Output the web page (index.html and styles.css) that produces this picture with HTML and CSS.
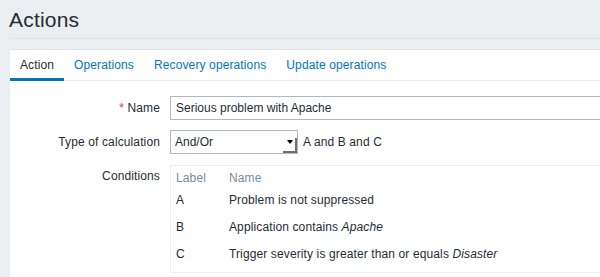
FILE: index.html
```html
<!DOCTYPE html>
<html lang="en">

<head>
    <meta charset="UTF-8">
    <meta name="viewport" content="width=device-width, initial-scale=1.0">
    <title>Actions</title>
    <link rel="stylesheet" href="styles.css">
</head>

<body>
    <header class="page-header">
        <h1>Actions</h1>
    </header>

    <main class="page-body">
        <div class="tab-panel">
            <ul class="tabs">
                <li class="tab active"><a href="#">Action</a></li>
                <li class="tab"><a href="#">Operations</a></li>
                <li class="tab"><a href="#">Recovery operations</a></li>
                <li class="tab"><a href="#">Update operations</a></li>
            </ul>

            <form class="form-list">
                <label class="form-label" for="name"><span class="required">*</span> Name</label>
                <div class="form-field">
                    <input type="text" id="name" class="textbox" value="Serious problem with Apache">
                </div>

                <label class="form-label" for="evaltype">Type of calculation</label>
                <div class="form-field">
                    <div class="select-wrap">
                        <select id="evaltype" class="select">
                            <option selected>And/Or</option>
                            <option>And</option>
                            <option>Or</option>
                            <option>Custom expression</option>
                        </select>
                        <span class="select-arrow"></span>
                    </div>
                    <span class="expression">A and B and C</span>
                </div>

                <div class="form-label form-label-top">Conditions</div>
                <div class="form-field">
                    <div class="conditions">
                        <table class="conditions-table">
                            <thead>
                                <tr>
                                    <th class="col-label">Label</th>
                                    <th>Name</th>
                                </tr>
                            </thead>
                            <tbody>
                                <tr>
                                    <td>A</td>
                                    <td>Problem is not suppressed</td>
                                </tr>
                                <tr>
                                    <td>B</td>
                                    <td>Application contains <em>Apache</em></td>
                                </tr>
                                <tr>
                                    <td>C</td>
                                    <td>Trigger severity is greater than or equals <em>Disaster</em></td>
                                </tr>
                            </tbody>
                        </table>
                    </div>
                </div>
            </form>
        </div>
    </main>
</body>

</html>
```

FILE: styles.css
```css
html,
body {
    overflow: hidden;
}

body {
    font-family: "Liberation Sans", Arial, sans-serif;
    font-size: 12px;
    line-height: 14px;
    letter-spacing: 0.12px;
    color: #1f2c33;
    margin: 0;
    padding: 0 0 0 10px;
    background-color: #ebeef0;
}

.page-header {
    padding: 8px 0 6px;
    border-bottom: 1px solid #dfe4e7;
    margin-bottom: 10px;
}

h1 {
    margin: 0 0 0 -1px;
    font-size: 21px;
    line-height: 24px;
    font-weight: normal;
    letter-spacing: 0.2px;
    color: #1f2c33;
}

.tab-panel {
    background: white;
    border-top: 1px solid #dfe4e7;
    min-height: 240px;
}

.tabs {
    display: flex;
    list-style: none;
    margin: 0;
    padding: 0;
    border-bottom: 1px solid #ebeef0;
}

.tab {
    margin-bottom: -1px;
}

.tab a {
    display: block;
    padding: 8px 10px 6px;
    border-bottom: 3px solid transparent;
    color: #0275b8;
    text-decoration: none;
}

.tab.active a {
    color: #1f2c33;
    border-bottom-color: #0275b8;
}

.form-list {
    display: grid;
    grid-template-columns: 150px auto;
    column-gap: 10px;
    row-gap: 10px;
    padding-top: 15px;
}

.form-label {
    text-align: right;
    padding-top: 5px;
}

.form-label-top {
    padding-top: 4px;
    margin-top: 1px;
}

.required {
    color: #e33734;
}

.form-field {
    display: flex;
    align-items: center;
    gap: 5px;
}

.textbox,
.select {
    box-sizing: border-box;
    height: 24px;
    margin: 0;
    padding: 0 5px;
    border: 1px solid #acbbc2;
    background: white;
    font-family: inherit;
    font-size: 12px;
    color: #1f2c33;
    outline: none;
}

.textbox {
    width: 453px;
}

.select-wrap {
    position: relative;
}

.select {
    width: 128px;
    appearance: none;
    -webkit-appearance: none;
    border-radius: 0;
    padding-left: 4px;
}

/* old-style dropdown button in the bottom right corner */
.select-arrow {
    position: absolute;
    right: 1px;
    bottom: 1px;
    width: 12px;
    height: 13px;
    border-right: 2px solid #6f6f6f;
    border-bottom: 2px solid #6f6f6f;
    pointer-events: none;
}

.select-arrow::after {
    content: "";
    position: absolute;
    left: 4px;
    top: 2px;
    border-left: 3px solid transparent;
    border-right: 3px solid transparent;
    border-top: 4px solid #000;
}

.conditions {
    box-sizing: border-box;
    width: 453px;
    border: 1px solid #ebeef0;
    padding: 0 5px 4px;
    margin-top: 1px;
}

.conditions-table {
    border-collapse: collapse;
}

.conditions-table th,
.conditions-table td {
    padding: 6px 0 7px;
    text-align: left;
    white-space: nowrap;
}

.conditions-table th {
    padding: 5px 0 2px;
    font-weight: normal;
    color: #768d99;
}

.col-label {
    width: 53px;
}
```
